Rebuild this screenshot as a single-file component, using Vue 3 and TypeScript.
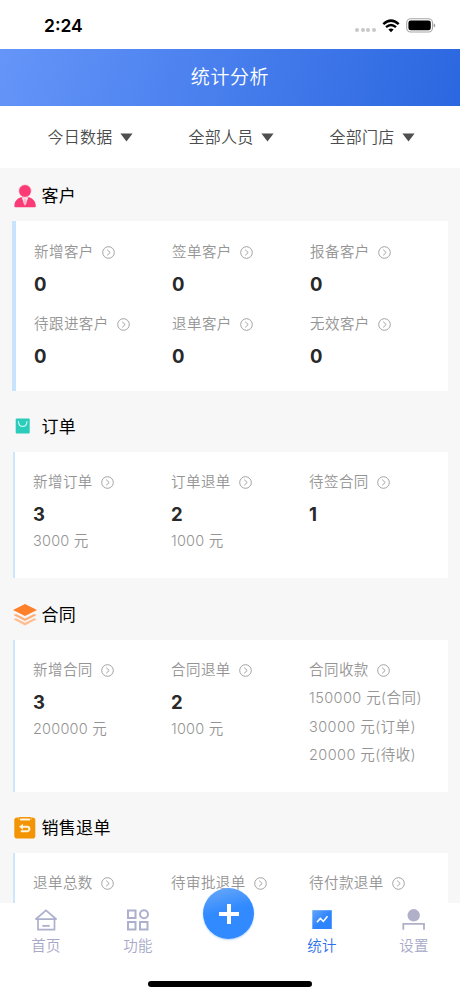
<script setup lang="ts">
interface Stat {
  label: string
  value?: string
  notes?: string[]
}

interface Section {
  key: string
  title: string
  stats: Stat[]
}

interface Tab {
  key: string
  label: string
  active?: boolean
}

const filters: string[] = ['今日数据', '全部人员', '全部门店']

const sections: Section[] = [
  {
    key: 'customer',
    title: '客户',
    stats: [
      { label: '新增客户', value: '0' },
      { label: '签单客户', value: '0' },
      { label: '报备客户', value: '0' },
      { label: '待跟进客户', value: '0' },
      { label: '退单客户', value: '0' },
      { label: '无效客户', value: '0' },
    ],
  },
  {
    key: 'order',
    title: '订单',
    stats: [
      { label: '新增订单', value: '3', notes: ['3000 元'] },
      { label: '订单退单', value: '2', notes: ['1000 元'] },
      { label: '待签合同', value: '1' },
    ],
  },
  {
    key: 'contract',
    title: '合同',
    stats: [
      { label: '新增合同', value: '3', notes: ['200000 元'] },
      { label: '合同退单', value: '2', notes: ['1000 元'] },
      { label: '合同收款', notes: ['150000 元(合同)', '30000 元(订单)', '20000 元(待收)'] },
    ],
  },
  {
    key: 'refund',
    title: '销售退单',
    stats: [{ label: '退单总数' }, { label: '待审批退单' }, { label: '待付款退单' }],
  },
]

const tabs: Tab[] = [
  { key: 'home', label: '首页' },
  { key: 'apps', label: '功能' },
  { key: 'add', label: '' },
  { key: 'stats', label: '统计', active: true },
  { key: 'settings', label: '设置' },
]
</script>

<template>
  <div class="phone">
    <div class="status">
      <span class="time">2:24</span>
      <div class="indicators">
        <span class="dots"><i v-for="n in 4" :key="n"></i></span>
        <svg class="wifi" width="18" height="14" viewBox="0 0 18 14">
          <path d="M1.3 5.2Q9-1.9 16.7 5.2" fill="none" stroke="#000" stroke-width="2.5" />
          <path d="M4 8.1Q9 3.7 14 8.1" fill="none" stroke="#000" stroke-width="2.4" />
          <path d="M6.4 10.6Q9 8.4 11.6 10.6L9 13.2Z" fill="#000" />
        </svg>
        <svg class="battery" width="30" height="15" viewBox="0 0 30 15">
          <rect x=".7" y=".8" width="25.8" height="13.2" rx="4" fill="none" stroke="#a6a6a6" stroke-width="1.1" />
          <rect x="2.4" y="2.5" width="22.4" height="9.8" rx="2.3" fill="#000" />
          <path d="M27.7 5.2q1.6 .7 1.6 2.2t-1.6 2.2z" fill="#999" />
        </svg>
      </div>
    </div>

    <header class="title-bar">统计分析</header>

    <nav class="filters">
      <button v-for="filter in filters" :key="filter" class="filter">
        <span>{{ filter }}</span>
        <svg width="13" height="9" viewBox="0 0 13 9"><path d="M.4 .5h12.2L6.5 8.5z" fill="#4d4f50" /></svg>
      </button>
    </nav>

    <main class="content">
      <section v-for="section in sections" :key="section.key" class="section" :class="section.key">
        <h2 class="heading">
          <svg v-if="section.key === 'customer'" width="24" height="24" viewBox="0 0 24 24">
            <path d="M1.4 22.5C1.4 16.8 4.5 14.2 8 13.2h8c3.500 1 6.800 3.600 6.800 9.300q0 .8-1 .8H2.400q-1 0-1-.8z" fill="#fa3b75" />
            <circle cx="12" cy="7" r="6.400" fill="#fa3b75" stroke="#f7f7f7" stroke-width=".8" />
            <path d="M8.600 13.500h6.800L12 21.500z" fill="#ffe4ec" />
            <path d="M11.200 14.500h1.600l.9 4.500L12 21.500 10.300 19z" fill="#ffb9cd" />
          </svg>
          <svg v-else-if="section.key === 'order'" width="24" height="24" viewBox="0 0 24 24">
            <rect x="2.700" y="3.500" width="14" height="15" rx="1" fill="#2bccba" />
            <path d="M5.500 6.700C5.800 13 13.600 13 13.900 6.700" fill="none" stroke="#c9f6ef" stroke-width="1.200" stroke-linecap="round" />
          </svg>
          <svg v-else-if="section.key === 'contract'" width="24" height="24" viewBox="0 0 24 24">
            <path d="M.4 16.300l2.600-1 9 4.400 9-4.400 2.600 1L12 22.500z" fill="#ffbd91" />
            <path d="M.4 12.100l2.600-1 9 4.400 9-4.400 2.600 1L12 18.100z" fill="#ffad76" />
            <path d="M12 1L24 7 12 13 0 7z" fill="#ff802b" />
          </svg>
          <svg v-else width="24" height="24" viewBox="0 0 24 24">
            <rect x="1.300" y="1.500" width="21" height="21" rx="2.800" fill="#f29404" />
            <path d="M5 1h14v1.500a1.500 1.500 0 0 1-1.500 1.500h-11A1.500 1.500 0 0 1 5 2.500z" fill="#f7c97f" />
            <rect x="5.500" y="1" width="13" height="4" rx="1.800" fill="#f29404" />
            <rect x="6.800" y="2.500" width="10.500" height="2" rx=".9" fill="#fff4de" />
            <path d="M8.500 10.700h5.600a2.300 2.300 0 0 1 0 4.600H8.600" fill="none" stroke="#fff4de" stroke-width="2" stroke-linecap="round" />
            <path d="M6 10.700l4-3v6z" fill="#fff4de" />
          </svg>
          <span>{{ section.title }}</span>
        </h2>
        <div class="card">
          <div v-for="stat in section.stats" :key="stat.label" class="stat">
            <div class="label">
              <span>{{ stat.label }}</span>
              <svg width="13" height="13" viewBox="0 0 13 13" fill="none" stroke="#999" stroke-width=".9">
                <circle cx="6.500" cy="6.500" r="5.800" />
                <path d="M5.200 3.700L8.200 6.500 5.200 9.300" />
              </svg>
            </div>
            <div v-if="stat.value" class="value">{{ stat.value }}</div>
            <div v-if="stat.notes" class="notes" :class="{ loose: !stat.value }">
              <div v-for="note in stat.notes" :key="note">{{ note }}</div>
            </div>
          </div>
        </div>
      </section>
    </main>

    <footer class="tab-bar">
      <div v-for="tab in tabs" :key="tab.key" class="tab" :class="{ active: tab.active }">
        <button v-if="tab.key === 'add'" class="add">
          <svg width="20" height="20" viewBox="0 0 20 20"><path d="M10 0v20M0 10h20" stroke="#fff" stroke-width="4" /></svg>
        </button>
        <template v-else>
          <svg v-if="tab.key === 'home'" width="24" height="24" viewBox="0 0 24 24" fill="none" stroke="#adb0cc" stroke-width="1.700">
            <path d="M1.400 11.500L12 2.300l10.600 9.200M1.400 11.200h21.200M4 11v10.700h16.500V11M8.300 17.800h7.400" />
          </svg>
          <svg v-else-if="tab.key === 'apps'" width="24" height="24" viewBox="0 0 24 24" fill="none" stroke="#adb0cc" stroke-width="2">
            <rect x="2" y="2.500" width="7.500" height="7.500" />
            <circle cx="18" cy="6.200" r="4" />
            <rect x="2" y="14" width="7.500" height="7.500" />
            <rect x="14" y="14" width="7.500" height="7.500" />
          </svg>
          <svg v-else-if="tab.key === 'stats'" width="24" height="24" viewBox="0 0 24 24">
            <defs>
              <linearGradient id="stats-fill" x1="0" y1="0" x2="1" y2="1">
                <stop offset="0" stop-color="#62a4fb" />
                <stop offset=".55" stop-color="#2e84fc" />
              </linearGradient>
            </defs>
            <rect x="2.300" y="2.200" width="19.500" height="18.800" fill="url(#stats-fill)" />
            <path d="M7 14.300l3.300-3.900 3 3 4.200-5.200" fill="none" stroke="#fff" stroke-width="1.600" />
          </svg>
          <svg v-else width="24" height="24" viewBox="0 0 24 24">
            <circle cx="11.700" cy="7.300" r="6.200" fill="#b0b1c9" />
            <path d="M1.300 21.800v-5.900H22v5.900" fill="none" stroke="#b0b1c9" stroke-width="1.800" />
          </svg>
          <span>{{ tab.label }}</span>
        </template>
      </div>
      <div class="home-indicator"></div>
    </footer>
  </div>
</template>

<style>
body {
  margin: 0;
}
</style>

<style scoped>
.phone {
  width: 460px;
  height: 996px;
  display: flex;
  flex-direction: column;
  overflow: hidden;
  background: #f7f7f7;
  font-family: Inter, 'Noto Sans CJK SC', sans-serif;
  font-weight: 350;
}

button {
  padding: 0;
  border: 0;
  background: none;
  font: inherit;
  color: inherit;
  letter-spacing: inherit;
}

.status {
  height: 49px;
  flex: none;
  box-sizing: border-box;
  padding: 2px 24px 0 44px;
  display: flex;
  align-items: center;
  justify-content: space-between;
  background: #fff;
}

.time {
  font-size: 17.500px;
  font-weight: 600;
  color: #000;
}

.indicators {
  display: flex;
  align-items: center;
}

.dots {
  display: flex;
  gap: 1.600px;
  padding-top: 9px;
  margin-right: 6px;
}

.dots i {
  width: 4px;
  height: 4px;
  border-radius: 50%;
  background: #c8c8c8;
}

.wifi {
  margin-right: 6px;
}

.title-bar {
  height: 57px;
  flex: none;
  box-sizing: border-box;
  padding-top: 1px;
  line-height: 56px;
  text-align: center;
  font-size: 19px;
  letter-spacing: 0.600px;
  color: #fff;
  background: linear-gradient(105deg, #6595f8 0%, #4a80ee 45%, #2b67e0 100%);
}

.filters {
  height: 62px;
  flex: none;
  box-sizing: border-box;
  padding: 0 20px;
  display: grid;
  grid-template-columns: repeat(3, 141px);
  background: #fff;
}

.filter {
  display: flex;
  align-items: center;
  justify-content: center;
  gap: 8px;
  font-size: 16px;
  letter-spacing: 0.200px;
  color: #4a4c4d;
}

.filter span {
  padding-bottom: 2px;
}

.content {
  flex: 1;
  min-height: 0;
  overflow: hidden;
}

.heading {
  height: 53px;
  margin: 0;
  padding: 2px 0 0 12.500px;
  box-sizing: border-box;
  display: flex;
  align-items: center;
  gap: 5px;
  font-size: 17px;
  font-weight: 400;
  letter-spacing: 0.300px;
  color: #000;
}

.heading svg {
  flex: none;
}

.heading span {
  padding-bottom: 2px;
}

.card {
  box-sizing: border-box;
  margin: 0 12px 0 13px;
  padding: 18px 0 0 18px;
  border-left: 2px solid #cce7fb;
  background: #fff;
  display: grid;
  grid-template-columns: repeat(3, 138px);
  align-content: start;
  row-gap: 16px;
}

.customer .card {
  height: 170px;
  margin-left: 12px;
  padding-top: 19px;
  border-left: 4px solid #c8e4fd;
}

.order .heading,
.refund .heading {
  height: 61px;
  padding-top: 10px;
}

.order .card {
  height: 126px;
}

.contract .heading {
  height: 62px;
  padding-top: 11px;
}

.contract .card {
  height: 152px;
}

.refund .card {
  height: 170px;
}

.label {
  height: 24px;
  display: flex;
  align-items: center;
  gap: 8px;
  white-space: nowrap;
  font-size: 14.500px;
  letter-spacing: 0.450px;
  color: #949494;
}

.label span {
  padding-bottom: 3px;
}

.customer .label span {
  padding-bottom: 4px;
}

.label svg {
  flex: none;
}

.value {
  margin-top: 8px;
  line-height: 24px;
  font-size: 18.500px;
  font-weight: 700;
  color: #292929;
}

.notes {
  padding-top: 1px;
  line-height: 28.500px;
  white-space: nowrap;
  font-size: 14.500px;
  letter-spacing: 0.200px;
  color: #949494;
}

.notes.loose {
  padding-top: 2px;
  letter-spacing: 0.420px;
}

.tab-bar {
  position: relative;
  height: 93px;
  flex: none;
  display: grid;
  grid-template-columns: repeat(5, 92px);
  background: #fff;
}

.tab {
  padding-top: 5px;
  display: flex;
  flex-direction: column;
  align-items: center;
  font-size: 14.500px;
  line-height: 24px;
  letter-spacing: 0.200px;
  color: #a7a9c7;
}

.tab span {
  margin-top: 2px;
}

.tab.active {
  color: #2e6fec;
}

.add {
  flex: none;
  width: 51px;
  height: 51px;
  margin-top: -20px;
  margin-right: 3px;
  border-radius: 50%;
  display: flex;
  align-items: center;
  justify-content: center;
  background: linear-gradient(165deg, #6aa9f8 2%, #318aff 45%);
  box-shadow: 0 1px 2px #b8d4f7;
}

.home-indicator {
  position: absolute;
  left: 148px;
  bottom: 9px;
  width: 164px;
  height: 6px;
  border-radius: 3px;
  background: #000;
}
</style>
